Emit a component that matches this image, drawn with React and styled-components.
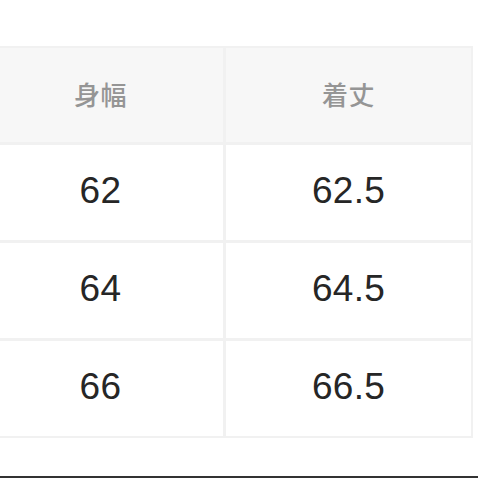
import React from "react";
import styled, { createGlobalStyle } from "styled-components";

const Global = createGlobalStyle`
  html, body { margin: 0; padding: 0; background: #ffffff; }
  body { font-family: "Liberation Sans", Arial, "Noto Sans CJK JP", sans-serif; }
`;

const Page = styled.div`
  width: 478px;
  height: 478px;
  overflow: hidden;
  display: flex;
  flex-direction: column;
  background: #ffffff;
`;

const Table = styled.div`
  margin-top: 46px;
  margin-left: -24px;
  width: max-content;
  display: grid;
  grid-template-columns: 245px 245px;
  grid-auto-rows: 95px;
  grid-template-rows: 94px;
  gap: 3px;
  padding: 2px;
  background: #f1f1f1;
`;

const Cell = styled.div`
  display: flex;
  align-items: center;
  justify-content: center;
  padding-bottom: ${(p) => (p.$head ? "4px" : "3px")};
  box-sizing: border-box;
  background: ${(p) => (p.$head ? "#f7f7f7" : "#ffffff")};
  color: ${(p) => (p.$head ? "#959595" : "#262626")};
  font-family: ${(p) =>
    p.$head
      ? `"Noto Sans CJK JP", "Noto Sans CJK SC", sans-serif`
      : `"Liberation Sans", Arial, sans-serif`};
  font-size: ${(p) => (p.$head ? "26px" : "37px")};
  font-weight: ${(p) => (p.$head ? 500 : 400)};
  letter-spacing: ${(p) => (p.$head ? "0.5px" : "0.3px")};
`;

const Spacer = styled.div`
  flex: 1;
`;

const BottomBar = styled.div`
  height: 2px;
  background: #333333;
`;

const rows = [
  ["62", "62.5"],
  ["64", "64.5"],
  ["66", "66.5"],
];

export default function App() {
  return (
    <Page>
      <Global />
      <Table>
        <Cell $head>身幅</Cell>
        <Cell $head>着丈</Cell>
        {rows.map((r) =>
          r.map((v) => <Cell key={v}>{v}</Cell>)
        )}
      </Table>
      <Spacer />
      <BottomBar />
    </Page>
  );
}
